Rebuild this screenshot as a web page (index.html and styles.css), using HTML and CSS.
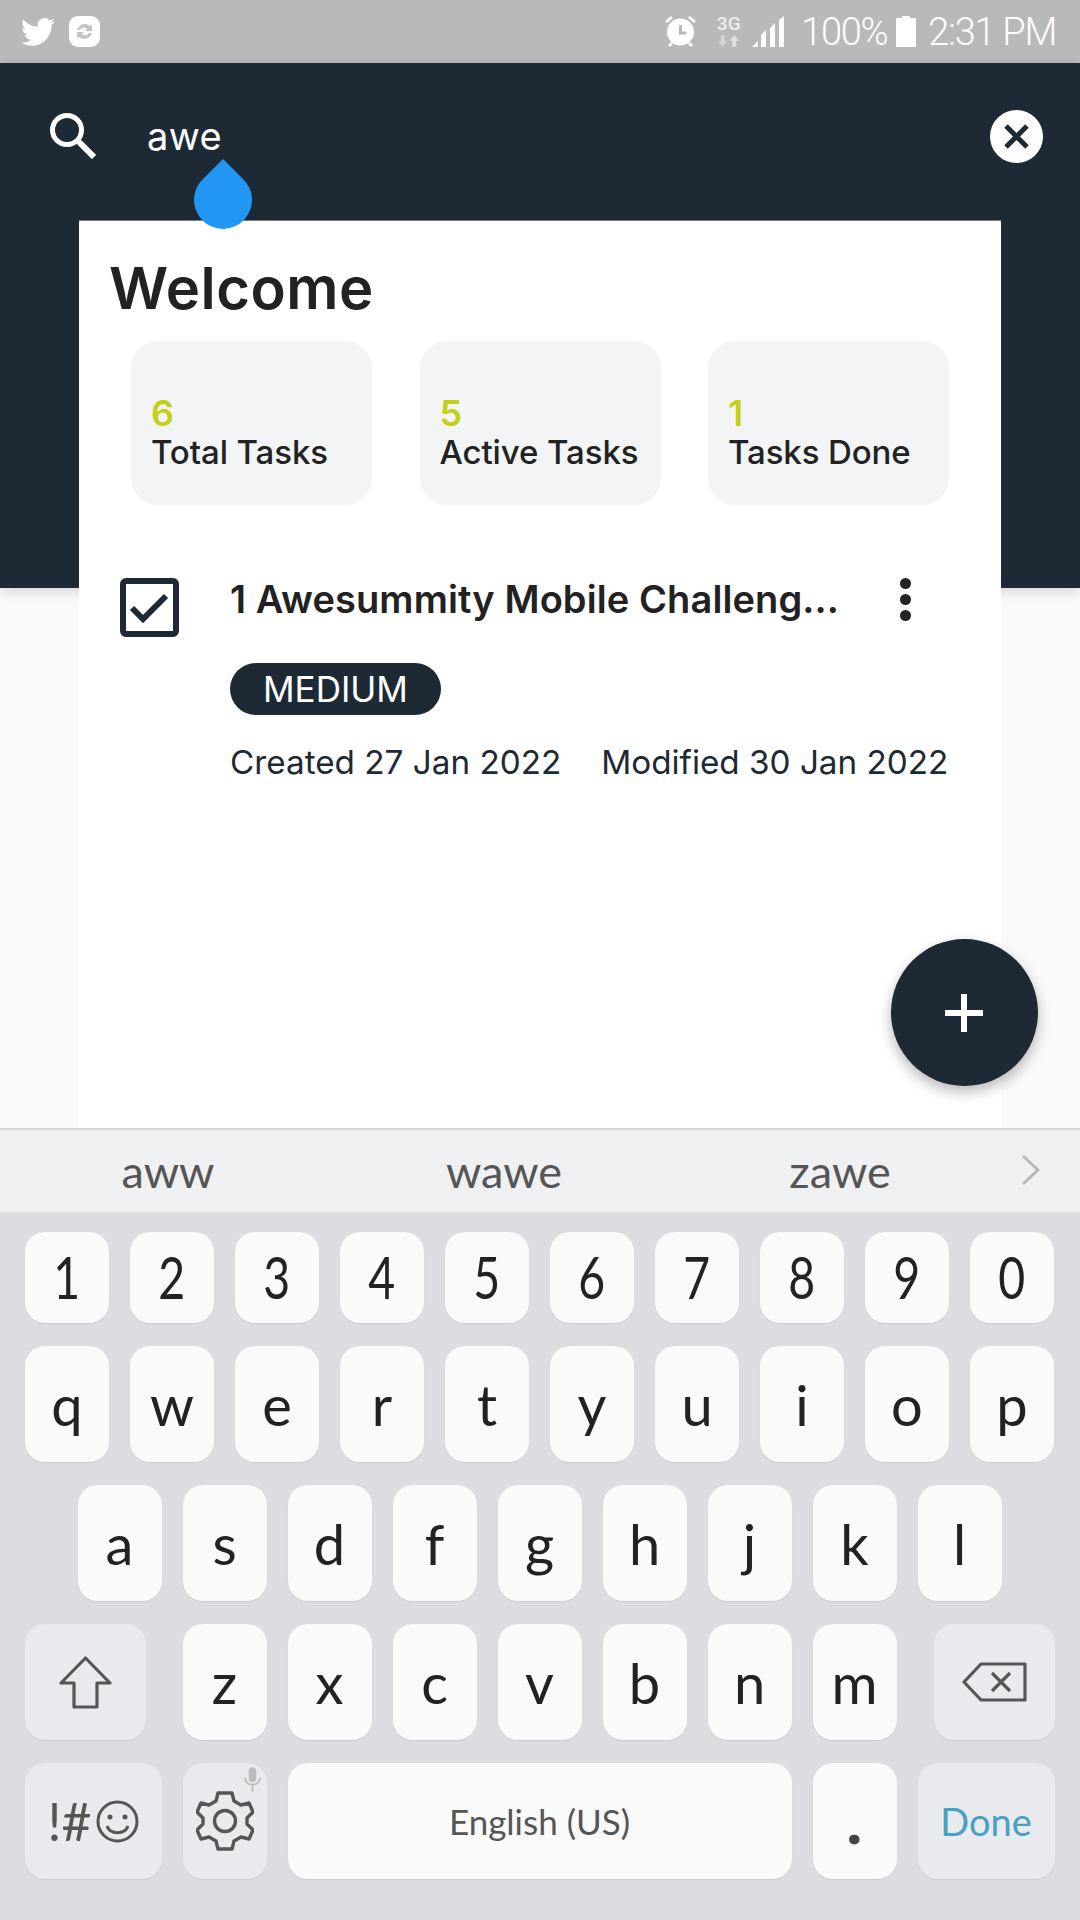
FILE: index.html
```html
<!DOCTYPE html>
<html lang="en">

<head>
    <meta charset="utf-8">
    <meta name="viewport" content="width=device-width, initial-scale=1.0">
    <title>Tasks</title>
    <link rel="stylesheet" href="styles.css">
</head>

<body>
    <div class="screen">
        <div class="statusbar">
            <svg class="ic-twitter" viewBox="0 0 24 24"><path fill="#fff" d="M23.95 4.57a10 10 0 0 1-2.83.78 4.96 4.96 0 0 0 2.16-2.72c-.95.55-2 .96-3.13 1.19a4.92 4.92 0 0 0-8.39 4.48C7.69 8.1 4.07 6.13 1.64 3.16a4.82 4.82 0 0 0-.67 2.48c0 1.71.87 3.21 2.19 4.1a4.9 4.9 0 0 1-2.23-.62v.06a4.92 4.92 0 0 0 3.95 4.83 5 5 0 0 1-2.21.08 4.94 4.94 0 0 0 4.6 3.42A9.87 9.87 0 0 1 0 19.54a14 14 0 0 0 7.56 2.21c9.05 0 14-7.5 14-13.98 0-.21 0-.42-.02-.63a9.94 9.94 0 0 0 2.41-2.57z"/></svg>
            <svg class="ic-sync" viewBox="0 0 31 31"><rect width="31" height="31" rx="9" fill="#fff"/><path d="M8 14a8 8 0 0 1 13-4l2-2v7h-7l2-2a4.5 4.5 0 0 0-7 1zM23 17a8 8 0 0 1-13 4l-2 2v-7h7l-2 2a4.5 4.5 0 0 0 7-1z" fill="#c4c4c4"/></svg>
            <div class="status-right">
                <svg class="ic-alarm" viewBox="0 0 31 31"><circle cx="15.5" cy="16" r="13.5" fill="#fff"/><path d="M15.5 9v8h6" fill="none" stroke="#b9b9b9" stroke-width="3"/><path d="M1 6l6-5M30 6l-6-5M4 30l3-3M27 30l-3-3" stroke="#fff" stroke-width="2.6"/></svg>
                <div class="net">
                    <span class="net-label">3G</span>
                    <svg class="ic-arrows" viewBox="0 0 22 12"><path d="M3 0h4v6h3l-5 6-5-6h3z" fill="#d2d2d2"/><path d="M15 12h4V6h3l-5-6-5 6h3z" fill="#e0e0e0"/></svg>
                </div>
                <svg class="ic-signal" viewBox="0 0 32 31"><path d="M0 31l6-6v6zM9 31V19l5-5v17zM18 31V12l5-5v24zM27 31V4l5-4v31z" fill="#fff"/></svg>
                <span class="pct">100%</span>
                <svg class="ic-battery" viewBox="0 0 20 31"><path d="M6 0h8v2h6v29H0V2h6z" fill="#fff"/></svg>
                <span class="clock">2:31 PM</span>
            </div>
        </div>

        <header class="topbar">
            <svg class="ic-search" viewBox="0 0 46 46"><circle cx="17" cy="17" r="14.5" fill="none" stroke="#fff" stroke-width="5"/><path d="M27.5 27.5L44 44" stroke="#fff" stroke-width="6"/></svg>
            <span class="query">awe</span>
            <svg class="ic-close" viewBox="0 0 53 53"><circle cx="26.5" cy="26.5" r="26.5" fill="#fff"/><path d="M16 16l21 21M37 16L16 37" stroke="#1d2935" stroke-width="5"/></svg>
        </header>

        <main class="content">
            <section class="card">
                <h1>Welcome</h1>
                <div class="stats">
                    <div class="stat"><span class="stat-num">6</span><span class="stat-label">Total Tasks</span></div>
                    <div class="stat"><span class="stat-num">5</span><span class="stat-label">Active Tasks</span></div>
                    <div class="stat"><span class="stat-num">1</span><span class="stat-label">Tasks Done</span></div>
                </div>
                <article class="task">
                    <svg class="ic-check" viewBox="0 0 59 59"><rect x="3" y="3" width="53" height="53" rx="3" fill="none" stroke="#1d2935" stroke-width="6"/><path d="M12 30l11 11 23-23" fill="none" stroke="#1d2935" stroke-width="6"/></svg>
                    <div class="task-body">
                        <div class="task-title">1 Awesummity Mobile Challeng...</div>
                        <span class="badge">MEDIUM</span>
                        <div class="dates">
                            <span>Created 27 Jan 2022</span>
                            <span>Modified 30 Jan 2022</span>
                        </div>
                    </div>
                    <div class="kebab"><i></i><i></i><i></i></div>
                </article>
            </section>
        </main>

        <div class="keyboard">
            <div class="suggestions">
                <span>aww</span>
                <span>wawe</span>
                <span>zawe</span>
                <svg class="ic-more" viewBox="0 0 18 30"><path d="M1 1l15 14L1 29" fill="none" stroke="#b5b5b5" stroke-width="2.6"/></svg>
            </div>
            <div class="keys">
                <div class="row row-num">
                    <b><span>1</span></b><b><span>2</span></b><b><span>3</span></b><b><span>4</span></b><b><span>5</span></b><b><span>6</span></b><b><span>7</span></b><b><span>8</span></b><b><span>9</span></b><b><span>0</span></b>
                </div>
                <div class="row">
                    <b>q</b><b>w</b><b>e</b><b>r</b><b>t</b><b>y</b><b>u</b><b>i</b><b>o</b><b>p</b>
                </div>
                <div class="row row-mid">
                    <b>a</b><b>s</b><b>d</b><b>f</b><b>g</b><b>h</b><b>j</b><b>k</b><b>l</b>
                </div>
                <div class="row">
                    <b class="fn wide shift"><svg class="ic-shift" viewBox="0 0 53 53"><path d="M26.5 2L2 27h13v24h23V27h13z" fill="none" stroke="#555" stroke-width="3.2" stroke-linejoin="round"/></svg></b>
                    <b>z</b><b>x</b><b>c</b><b>v</b><b>b</b><b>n</b><b>m</b>
                    <b class="fn wide back"><svg class="ic-back" viewBox="0 0 65 40"><path d="M19 2h44v36H19L2 20zM30 11l18 18M48 11L30 29" fill="none" stroke="#555" stroke-width="3.2" stroke-linejoin="round"/></svg></b>
                </div>
                <div class="row">
                    <b class="fn sym">!#<svg class="ic-smile" viewBox="0 0 43 43"><circle cx="21.5" cy="21.5" r="19.5" fill="none" stroke="#555" stroke-width="3"/><circle cx="14" cy="17" r="2.5" fill="#555"/><circle cx="29" cy="17" r="2.5" fill="#555"/><path d="M11 26c3 9 18 9 21 0" fill="none" stroke="#555" stroke-width="3"/></svg></b>
                    <b class="fn gear">
                        <svg class="ic-gear" viewBox="0 0 58 60"><path d="M22 2h14l2 8 7 4 8-2 4 9-6 6v6l6 6-4 9-8-2-7 4-2 8H22l-2-8-7-4-8 2-4-9 6-6v-6l-6-6 4-9 8 2 7-4z" fill="none" stroke="#555" stroke-width="3.4" stroke-linejoin="round"/><circle cx="29" cy="30" r="10.5" fill="none" stroke="#555" stroke-width="3.4"/></svg>
                        <svg class="ic-mic" viewBox="0 0 18 26"><rect x="5" y="0" width="8" height="16" rx="4" fill="#bbb"/><path d="M1 11c0 10 16 10 16 0M9 18v8" fill="none" stroke="#bbb" stroke-width="1.8"/></svg>
                    </b>
                    <b class="space">English (US)</b>
                    <b class="dot">.</b>
                    <b class="fn done">Done</b>
                </div>
            </div>
        </div>

        <svg class="handle" viewBox="0 0 58 70"><path d="M29 0l19 19a29 29 0 1 1-38 0z" fill="#2196f3"/></svg>
        <button class="fab"><svg viewBox="0 0 38 38"><path d="M19 0v38M0 19h38" stroke="#fff" stroke-width="6"/></svg></button>
    </div>
</body>

</html>
```

FILE: styles.css
```css
* {
    box-sizing: border-box;
}

html,
body {
    margin: 0;
    padding: 0;
}

body {
    font-family: "Inter", "Liberation Sans", sans-serif;
}

svg {
    display: block;
    flex: none;
}

.screen {
    position: relative;
    width: 1080px;
    height: 1920px;
    overflow: hidden;
    display: flex;
    flex-direction: column;
    background-color: #fafafa;
}

/* status bar */
.statusbar {
    height: 63px;
    flex: none;
    display: flex;
    align-items: center;
    padding: 0 24px 0 21px;
    background-color: #b9b9b9;
    color: #fff;
    font-family: "Roboto", sans-serif;
    font-weight: 300;
}

.ic-twitter {
    width: 34px;
    height: 34px;
}

.ic-sync {
    width: 31px;
    height: 31px;
    margin-left: 14px;
}

.status-right {
    margin-left: auto;
    display: flex;
    align-items: center;
}

.ic-alarm {
    width: 31px;
    height: 31px;
}

.net {
    margin-left: 21px;
    width: 23px;
    display: flex;
    flex-direction: column;
    align-items: center;
}

.net-label {
    font-size: 19px;
    line-height: 16px;
    font-weight: 500;
    color: #eee;
}

.ic-arrows {
    width: 21px;
    height: 12px;
    margin-top: 3px;
}

.ic-signal {
    width: 32px;
    height: 31px;
    margin-left: 12px;
}

.pct,
.clock {
    font-size: 38px;
    line-height: 44px;
}

.pct {
    margin-left: 17px;
    letter-spacing: -1.3px;
}

.ic-battery {
    width: 20px;
    height: 31px;
    margin-left: 9px;
}

.clock {
    margin-left: 12px;
    letter-spacing: -1.3px;
}

/* dark header */
.topbar {
    height: 525px;
    flex: none;
    display: flex;
    align-items: flex-start;
    padding: 50px 37px 0 50px;
    background-color: #1d2935;
    box-shadow: 0 4px 12px rgba(0, 0, 0, .15);
    color: #fff;
}

.ic-search {
    width: 46px;
    height: 46px;
}

.query {
    margin-left: 51px;
    font-size: 38px;
    line-height: 46px;
    letter-spacing: .4px;
}

.ic-close {
    width: 53px;
    height: 53px;
    margin-left: auto;
    margin-top: -3px;
}

/* card */
.content {
    flex: 1;
    min-height: 0;
    position: relative;
}

.card {
    width: 922px;
    height: 908px;
    margin: -368px 0 0 79px;
    position: relative;
    border-top: 1px solid #767d86;
    background-color: #fff;
    padding-top: 32px;
}

h1 {
    margin: 0 0 0 30px;
    font-size: 58px;
    line-height: 70px;
    font-weight: 600;
    letter-spacing: .5px;
    color: #222;
}

.stats {
    display: flex;
    gap: 47.5px;
    margin: 18px 0 0 52px;
}

.stat {
    width: 241px;
    height: 164px;
    padding: 52px 0 0 20px;
    display: flex;
    flex-direction: column;
    border-radius: 27px;
    background-color: #f3f4f6;
}

.stat-num {
    font-size: 36px;
    line-height: 40px;
    font-weight: 600;
    color: #c3d016;
}

.stat-label {
    font-size: 33px;
    line-height: 38px;
    font-weight: 500;
    letter-spacing: -.1px;
    color: #222;
}

.task {
    display: flex;
    margin: 73px 0 0 41px;
}

.ic-check {
    width: 59px;
    height: 59px;
}

.task-body {
    margin-left: 51px;
    width: 600px;
}

.task-title {
    margin-top: -2px;
    font-size: 38px;
    line-height: 46px;
    font-weight: 600;
    letter-spacing: .1px;
    color: #222;
    white-space: nowrap;
}

.badge {
    display: inline-block;
    margin-top: 41px;
    padding: 0 33px;
    height: 52px;
    line-height: 52px;
    border-radius: 26px;
    background-color: #1d2935;
    color: #fff;
    font-size: 35px;
}

.dates {
    display: flex;
    gap: 40px;
    margin-top: 27px;
    font-size: 33.25px;
    line-height: 40px;
    color: #1d2935;
    white-space: nowrap;
}

.kebab {
    display: flex;
    flex-direction: column;
    gap: 5px;
    margin-left: 70px;
}

.kebab i {
    width: 11px;
    height: 11px;
    border-radius: 50%;
    background-color: #222;
}

/* keyboard */
.keyboard {
    height: 792px;
    flex: none;
    position: relative;
    background-color: #dcdde1;
}

.suggestions {
    height: 84px;
    display: flex;
    align-items: center;
    position: relative;
    border-top: 2px solid #d5d6d8;
    background-color: #eff0f2;
    color: #555;
    font-family: "Lato", sans-serif;
    font-size: 45px;
}

.suggestions span {
    width: 336px;
    text-align: center;
}

.ic-more {
    width: 18px;
    height: 30px;
    margin-left: 14px;
    margin-top: -3px;
}

.keys {
    padding: 20px 1px 0 0;
    display: flex;
    flex-direction: column;
    gap: 23px;
}

.row {
    display: flex;
    justify-content: center;
    gap: 21px;
    height: 116px;
}

.row-num {
    height: 91px;
}

.row-num span {
    display: inline-block;
    margin-top: -3px;
    transform: scaleX(.8);
    font-size: 58px;
}

.row b {
    width: 84px;
    display: flex;
    align-items: center;
    justify-content: center;
    border-radius: 20px;
    background-color: #fafafa;
    box-shadow: 0 1px 1px rgba(0, 0, 0, .08);
    color: #222;
    font-family: "Lato", sans-serif;
    font-size: 56px;
    font-weight: 400;
}

.row .fn {
    background-color: #e9eaed;
    color: #555;
}

.row .wide {
    width: 121px;
}

.row .shift {
    margin-right: 16px;
}

.row .back {
    margin-left: 16px;
}

.ic-shift {
    width: 53px;
    height: 53px;
}

.ic-back {
    width: 65px;
    height: 40px;
}

.row .sym {
    width: 137px;
    font-size: 52px;
    gap: 4px;
}

.ic-smile {
    width: 43px;
    height: 43px;
}

.row .gear {
    position: relative;
}

.ic-gear {
    width: 58px;
    height: 60px;
}

.ic-mic {
    position: absolute;
    top: 4px;
    right: 6px;
    width: 17px;
    height: 25px;
}

.row .space {
    width: 504px;
    color: #555;
    font-size: 35px;
}

.row .dot {
    font-family: "Roboto", sans-serif;
    font-size: 66px;
    font-weight: 700;
    color: #444;
}

.row .done {
    width: 137px;
    color: #4a9fc4;
    font-size: 38px;
}

/* things lying over the rest */
.handle {
    position: absolute;
    left: 194px;
    top: 159px;
    width: 58px;
    height: 70px;
}

.fab {
    position: absolute;
    left: 891px;
    top: 939px;
    width: 147px;
    height: 147px;
    padding: 0 2px 0 0;
    border: 0;
    border-radius: 50%;
    display: flex;
    align-items: center;
    justify-content: center;
    background-color: #1d2935;
    box-shadow: 0 6px 14px rgba(0, 0, 0, .28);
}

.fab svg {
    width: 38px;
    height: 38px;
}
```
